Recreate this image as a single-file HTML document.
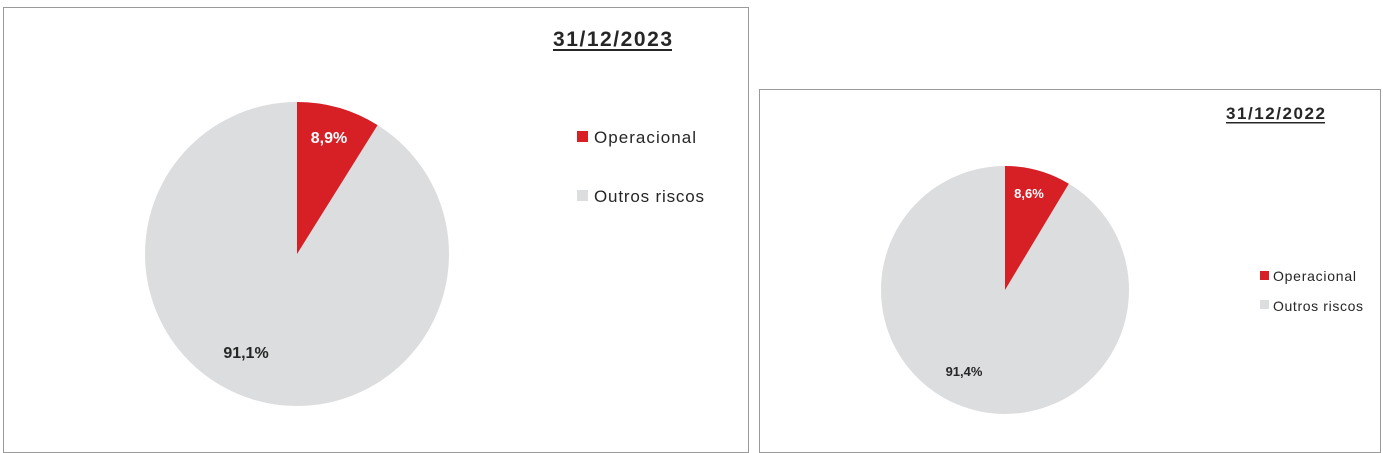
<!DOCTYPE html>
<html><head><meta charset="utf-8"><style>
html,body{margin:0;padding:0;background:#fff;width:1383px;height:453px;overflow:hidden}
svg{display:block;font-family:"Liberation Sans",sans-serif}
</style></head><body>
<svg width="1383" height="453" viewBox="0 0 1383 453" xmlns="http://www.w3.org/2000/svg">
<rect x="3.5" y="7.5" width="745" height="445" fill="#fff" stroke="#9a9a9a" stroke-width="1"/>
<rect x="759.5" y="89.5" width="621" height="363" fill="#fff" stroke="#9a9a9a" stroke-width="1"/>
<!-- left pie -->
<circle cx="297" cy="254" r="152" fill="#dcdddf"/>
<path d="M297 254 L297 102 A152 152 0 0 1 377.6 125.1 Z" fill="#d71f26"/>
<text x="329" y="143" fill="#fff" font-size="16" font-weight="bold" text-anchor="middle">8,9%</text>
<text x="246" y="358" fill="#262626" font-size="16" font-weight="bold" text-anchor="middle">91,1%</text>
<text x="553" y="46" fill="#262626" font-size="21" font-weight="bold" textLength="119">31/12/2023</text>
<rect x="553" y="49" width="119" height="2" fill="#262626"/>
<rect x="577" y="131" width="11" height="11" fill="#d71f26"/>
<text x="594" y="143" fill="#262626" font-size="17" textLength="102">Operacional</text>
<rect x="577" y="190" width="11" height="11" fill="#dcdddf"/>
<text x="594" y="202" fill="#262626" font-size="17" textLength="110">Outros riscos</text>
<!-- right pie -->
<circle cx="1005" cy="290" r="124" fill="#dcdddf"/>
<path d="M1005 290 L1005 166 A124 124 0 0 1 1068.8 183.7 Z" fill="#d71f26"/>
<text x="1029" y="198" fill="#fff" font-size="13" font-weight="bold" text-anchor="middle">8,6%</text>
<text x="964" y="376" fill="#262626" font-size="13" font-weight="bold" text-anchor="middle">91,4%</text>
<text x="1226" y="119" fill="#262626" font-size="17" font-weight="bold" textLength="99">31/12/2022</text>
<rect x="1226" y="122" width="99" height="1.5" fill="#262626"/>
<rect x="1260" y="271" width="9" height="9" fill="#d71f26"/>
<text x="1273" y="281" fill="#262626" font-size="14" textLength="83">Operacional</text>
<rect x="1260" y="300" width="9" height="9" fill="#dcdddf"/>
<text x="1273" y="311" fill="#262626" font-size="14" textLength="90">Outros riscos</text>
</svg>
</body></html>
